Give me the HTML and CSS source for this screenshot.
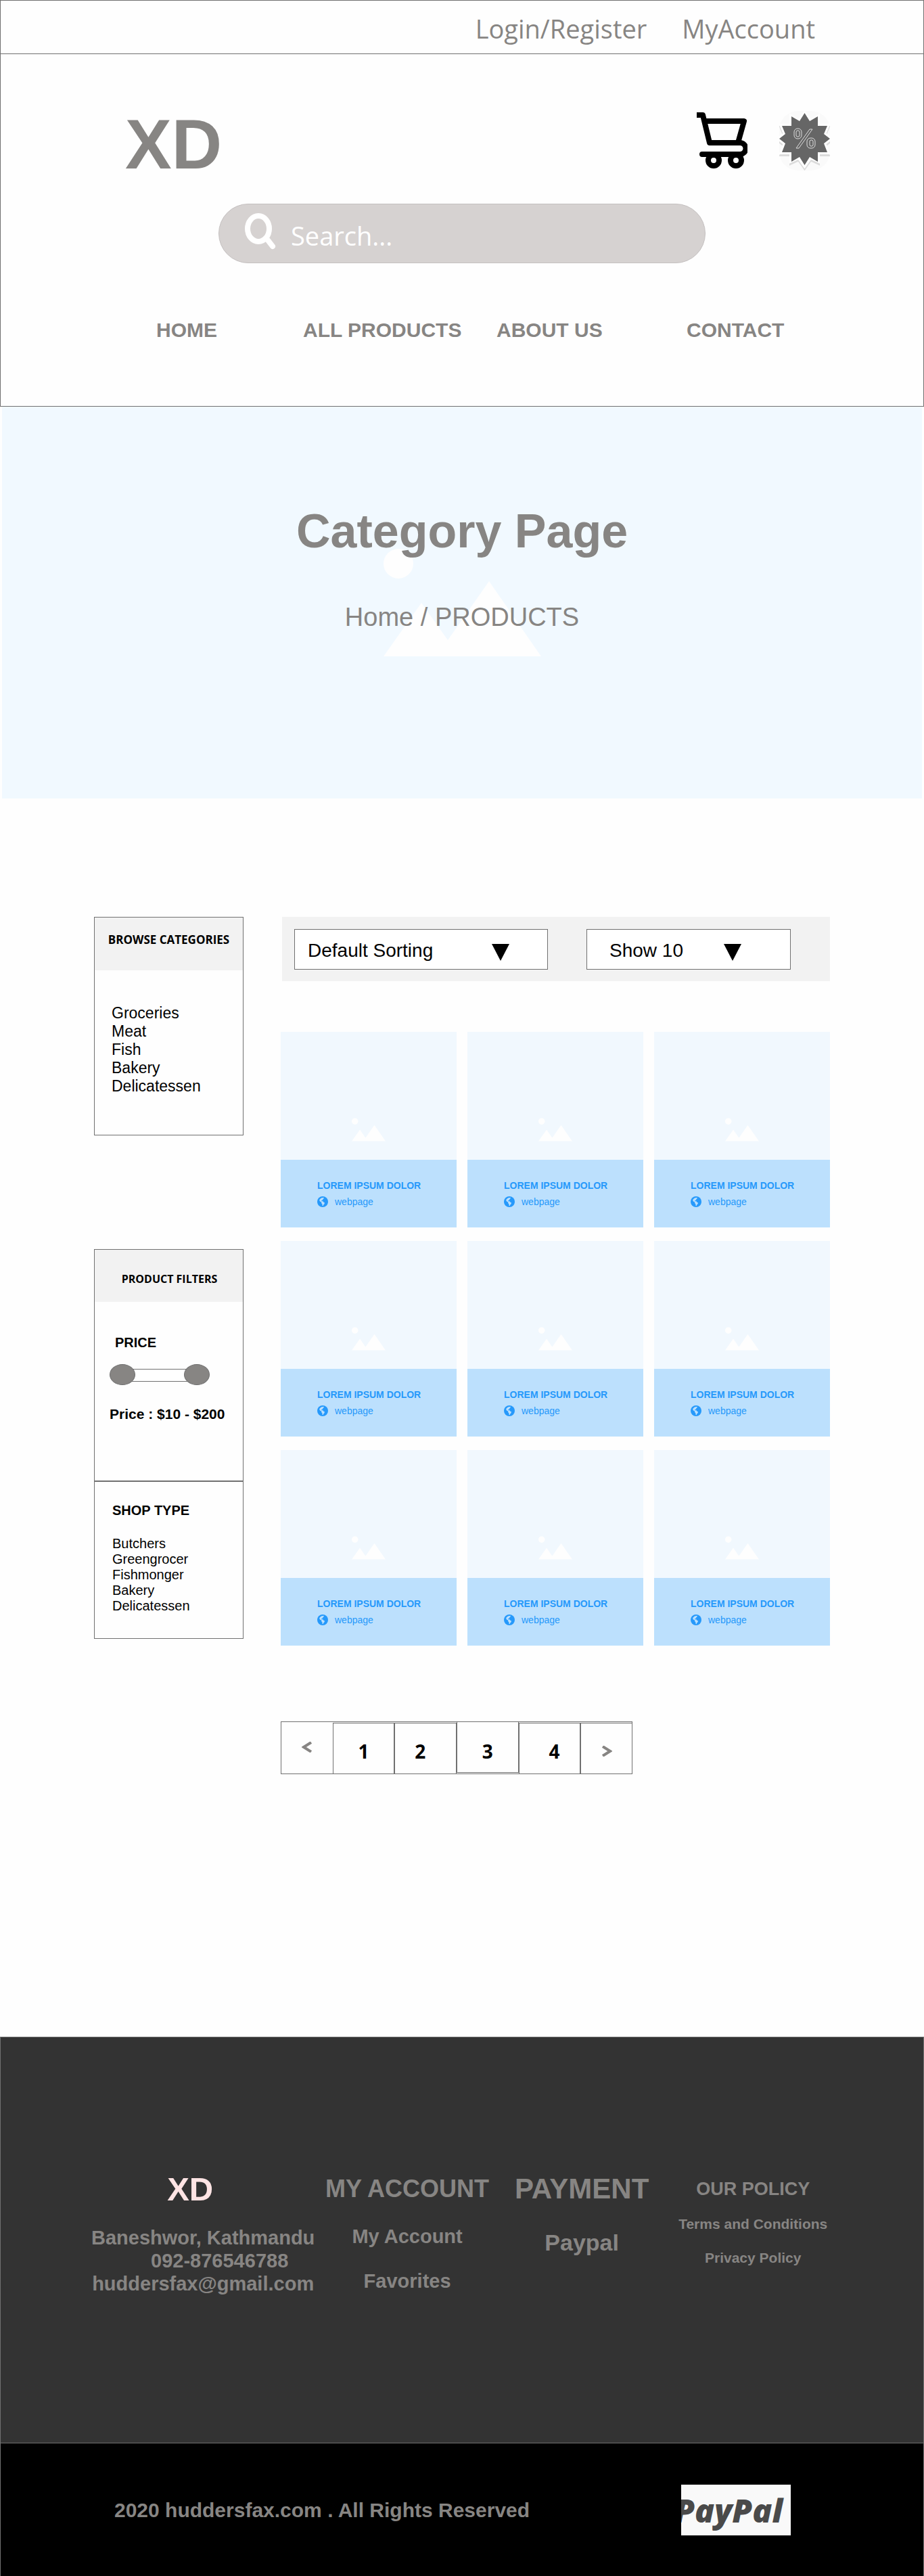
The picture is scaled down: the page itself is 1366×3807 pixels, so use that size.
FILE: index.html
```html
<!DOCTYPE html>
<html lang="en">
<head>
<meta charset="utf-8">
<meta name="viewport" content="width=device-width, initial-scale=1">
<title>Category Page</title>
<link rel="stylesheet" href="styles.css">
</head>
<body>
<svg class="sprite" aria-hidden="true">
  <symbol id="picture" viewBox="0 0 233 159">
    <ellipse cx="22" cy="22" rx="22" ry="22"/>
    <path d="M0 159 56 80 95 135 156 48 233 159Z"/>
  </symbol>
  <symbol id="globe" viewBox="0 0 16 16">
    <circle cx="8" cy="8" r="8" fill="#2699fb"/>
    <path fill="#bce0fd" d="M9.600 1.700 9.500 3.400 8 4.400 8.300 5.400 6.500 6 6.200 7.300 8.500 7.200 9 8.600 11 9.600 10.400 11.400 9.200 12.600 8.600 14.300 7.600 13.900 7.400 11.600 6.200 10.200 6.200 8.600 4.600 8 3.200 6.200 3.600 4.400 6 2.400Z"/>
  </symbol>
</svg>

<header class="site-header">
  <div class="topbar">
    <a href="#">Login/Register</a>
    <a href="#">MyAccount</a>
  </div>
  <div class="masthead">
    <div class="brand-row">
      <a class="logo" href="#">XD</a>
      <div class="tools">
        <a class="cart" href="#" aria-label="Cart">
          <svg width="75" height="84" viewBox="0 0 75 84">
            <path fill="none" stroke="#000" stroke-width="8" stroke-linejoin="round" d="M0 4H9L19 45H61L70 13H11"/>
            <path fill="none" stroke="#000" stroke-width="8" stroke-linecap="round" d="M60 45H64A8 8 0 0 1 64 62H8"/>
            <circle cx="25" cy="71" r="8" fill="#fff" stroke="#000" stroke-width="8"/>
            <circle cx="58" cy="71" r="8" fill="#fff" stroke="#000" stroke-width="8"/>
          </svg>
        </a>
        <a class="offers" href="#" aria-label="Offers">
          <svg width="75" height="88" viewBox="0 0 75 88">
            <rect width="75" height="88" rx="28" fill="#fafafa"/>
            <path fill="#dcdcdc" stroke="#dcdcdc" stroke-width="6" d="M37.500 7 46 19 57 12 57 25 71 25 66 37 75 44 66 51 71 64 57 64 57 76 46 71 37.500 83 29 71 18 76 18 64 4 64 9 51 0 44 9 37 4 25 18 25 18 12 29 19Z"/>
            <path fill="#fff" stroke="#fff" stroke-width="6" d="M37.500 4 46 16 57 9 57 22 71 22 66 34 75 41 66 48 71 61 57 61 57 73 46 68 37.500 80 29 68 18 73 18 61 4 61 9 48 0 41 9 34 4 22 18 22 18 9 29 16Z"/>
            <path fill="#666" d="M37.500 3 45 15 57 8 57 22 71 22 66 34 75 41 66 48 71 61 57 61 57 75 45 68 37.500 80 30 68 18 75 18 61 4 61 9 48 0 41 9 34 4 22 18 22 18 8 30 15Z"/>
            <g fill="none" stroke="#ddd">
              <rect x="22" y="26" width="11" height="15" rx="5"/><rect x="25" y="29" width="5" height="9" rx="2"/>
              <rect x="41" y="40" width="12" height="15" rx="5"/><rect x="45" y="43" width="5" height="9" rx="2"/>
              <path d="M45 27H49L29 55H25Z"/>
            </g>
          </svg>
        </a>
      </div>
    </div>
    <form class="search" role="search">
      <svg width="46" height="54" viewBox="0 0 46 54" aria-hidden="true">
        <ellipse cx="20" cy="23" rx="16" ry="19" fill="none" stroke="#fff" stroke-width="8"/>
        <path d="M34 40 41 49" stroke="#fff" stroke-width="8" stroke-linecap="round"/>
      </svg>
      <input type="search" placeholder="Search..." aria-label="Search">
    </form>
    <nav class="main-nav">
      <a href="#">HOME</a>
      <a href="#">ALL PRODUCTS</a>
      <a href="#">ABOUT US</a>
      <a href="#">CONTACT</a>
    </nav>
  </div>
</header>

<section class="hero">
  <svg class="hero-art" aria-hidden="true"><use href="#picture"/></svg>
  <div class="hero-text">
    <h1>Category Page</h1>
    <p><a href="#">Home</a> / PRODUCTS</p>
  </div>
</section>

<main class="shop">
  <aside class="sidebar">
    <section class="panel categories">
      <h2>BROWSE CATEGORIES</h2>
      <ul>
        <li><a href="#">Groceries</a></li>
        <li><a href="#">Meat</a></li>
        <li><a href="#">Fish</a></li>
        <li><a href="#">Bakery</a></li>
        <li><a href="#">Delicatessen</a></li>
      </ul>
    </section>
    <section class="panel filters">
      <h2>PRODUCT FILTERS</h2>
      <div class="price">
        <h3>PRICE</h3>
        <div class="slider">
          <input type="range" min="10" max="200" value="10" aria-label="Lowest price">
          <input type="range" min="10" max="200" value="200" aria-label="Highest price">
        </div>
        <p>Price : $10 - $200</p>
      </div>
      <div class="shop-type">
        <h3>SHOP TYPE</h3>
        <ul>
          <li><a href="#">Butchers</a></li>
          <li><a href="#">Greengrocer</a></li>
          <li><a href="#">Fishmonger</a></li>
          <li><a href="#">Bakery</a></li>
          <li><a href="#">Delicatessen</a></li>
        </ul>
      </div>
    </section>
  </aside>

  <div class="results">
    <div class="toolbar">
      <div class="picker sort">
        <select aria-label="Sorting"><option>Default Sorting</option></select>
        <svg width="26" height="25" viewBox="0 0 26 25" aria-hidden="true"><path d="M0 0H26L13 25Z"/></svg>
      </div>
      <div class="picker count">
        <select aria-label="Items per page"><option>Show 10</option></select>
        <svg width="26" height="25" viewBox="0 0 26 25" aria-hidden="true"><path d="M0 0H26L13 25Z"/></svg>
      </div>
    </div>

    <div class="products">
      <article class="card"><div class="thumb"><svg><use href="#picture"/></svg></div><div class="info"><h3>LOREM IPSUM DOLOR</h3><a href="#"><svg><use href="#globe"/></svg>webpage</a></div></article>
      <article class="card"><div class="thumb"><svg><use href="#picture"/></svg></div><div class="info"><h3>LOREM IPSUM DOLOR</h3><a href="#"><svg><use href="#globe"/></svg>webpage</a></div></article>
      <article class="card"><div class="thumb"><svg><use href="#picture"/></svg></div><div class="info"><h3>LOREM IPSUM DOLOR</h3><a href="#"><svg><use href="#globe"/></svg>webpage</a></div></article>
      <article class="card"><div class="thumb"><svg><use href="#picture"/></svg></div><div class="info"><h3>LOREM IPSUM DOLOR</h3><a href="#"><svg><use href="#globe"/></svg>webpage</a></div></article>
      <article class="card"><div class="thumb"><svg><use href="#picture"/></svg></div><div class="info"><h3>LOREM IPSUM DOLOR</h3><a href="#"><svg><use href="#globe"/></svg>webpage</a></div></article>
      <article class="card"><div class="thumb"><svg><use href="#picture"/></svg></div><div class="info"><h3>LOREM IPSUM DOLOR</h3><a href="#"><svg><use href="#globe"/></svg>webpage</a></div></article>
      <article class="card"><div class="thumb"><svg><use href="#picture"/></svg></div><div class="info"><h3>LOREM IPSUM DOLOR</h3><a href="#"><svg><use href="#globe"/></svg>webpage</a></div></article>
      <article class="card"><div class="thumb"><svg><use href="#picture"/></svg></div><div class="info"><h3>LOREM IPSUM DOLOR</h3><a href="#"><svg><use href="#globe"/></svg>webpage</a></div></article>
      <article class="card"><div class="thumb"><svg><use href="#picture"/></svg></div><div class="info"><h3>LOREM IPSUM DOLOR</h3><a href="#"><svg><use href="#globe"/></svg>webpage</a></div></article>
    </div>

    <nav class="pages" aria-label="Pages">
      <a class="step prev" href="#" aria-label="Previous"><svg width="16" height="16" viewBox="0 0 16 16"><path d="M14 1 3 8 14 15"/></svg></a>
      <a class="page" href="#">1</a>
      <a class="page early" href="#">2</a>
      <a class="page current" href="#" aria-current="page">3</a>
      <a class="page late" href="#">4</a>
      <a class="step next" href="#" aria-label="Next"><svg width="16" height="16" viewBox="0 0 16 16"><path d="M2 1 13 8 2 15"/></svg></a>
    </nav>
  </div>
</main>

<footer class="site-footer">
  <div class="footer-cols">
    <section class="contact">
      <h2>XD</h2>
      <address>
        <p>Baneshwor, Kathmandu</p>
        <p class="phone">092-876546788</p>
        <p><a href="#">huddersfax@gmail.com</a></p>
      </address>
    </section>
    <section class="account">
      <h2>MY ACCOUNT</h2>
      <ul><li><a href="#">My Account</a></li><li><a href="#">Favorites</a></li></ul>
    </section>
    <section class="payment">
      <h2>PAYMENT</h2>
      <ul><li><a href="#">Paypal</a></li></ul>
    </section>
    <section class="policy">
      <h2>OUR POLICY</h2>
      <ul><li><a href="#">Terms and Conditions</a></li><li><a href="#">Privacy Policy</a></li></ul>
    </section>
  </div>
  <div class="legal">
    <div class="legal-inner">
      <p>2020 huddersfax.com . All Rights Reserved</p>
      <div class="paypal">PayPal</div>
    </div>
  </div>
</footer>
</body>
</html>
```
FILE: styles.css
```css
* { box-sizing: border-box; }

body {
  margin: 0;
  background: #fefefe;
  color: #000;
  font-family: "Liberation Sans", Arial, sans-serif;
}

h1, h2, h3, p, ul { margin: 0; padding: 0; }
ul { list-style: none; }
a { color: inherit; text-decoration: none; }
svg { display: block; }
.sprite { position: absolute; width: 0; height: 0; }

/* Header */
.site-header { border: 1px solid #707070; color: #878583; }

.topbar {
  display: flex;
  justify-content: flex-end;
  gap: 52px;
  height: 79px;
  padding: 5px 160px 0 0;
  border-bottom: 1px solid #707070;
  font: 38px/72px "Open Sans", "Noto Sans", sans-serif;
}

.masthead {
  max-width: 1088px;
  margin: 0 auto;
  padding: 84px 0 94px;
}

.brand-row {
  display: flex;
  justify-content: space-between;
  align-items: flex-start;
  padding-left: 46px;
}
.logo { font-size: 103px; font-weight: bold; line-height: 100px; }
.tools { display: flex; gap: 47px; }
.cart { padding-top: 2px; }

.search {
  display: flex;
  align-items: center;
  gap: 22px;
  max-width: 720px;
  height: 88px;
  margin: 37px auto 0;
  padding: 0 38px;
  border: 1px solid #c4c0c0;
  border-radius: 44px;
  background: #d6d2d1;
}
.search svg { margin-bottom: 6px; }
.search input {
  flex: 1;
  min-width: 0;
  padding: 6px 0 0;
  border: 0;
  outline: 0;
  background: none;
  color: #fff;
  font: 38px/52px "Open Sans", "Noto Sans", sans-serif;
  appearance: none;
}
.search input::placeholder { color: #fff; opacity: 1; }

.main-nav {
  display: grid;
  grid-template-columns: 217fr 286fr 281fr 212fr;
  margin-top: 81px;
  padding-left: 92px;
  font-size: 30px;
  font-weight: bold;
  line-height: 36px;
}

/* Hero */
.hero {
  display: grid;
  margin: 0 3px;
  background: #f1f9ff;
  color: #878583;
  text-align: center;
}
.hero-art, .hero-text { grid-area: 1 / 1; }
.hero-art {
  width: 233px;
  height: 159px;
  margin-top: 210px;
  justify-self: center;
  fill: #fefefe;
}
.hero-text { padding: 144px 0 246px; }
.hero h1 { font-size: 70px; line-height: 80px; }
.hero p { margin-top: 65px; font-size: 38px; line-height: 44px; }

/* Shop */
.shop {
  display: grid;
  grid-template-columns: 221px minmax(0, 1fr);
  align-items: start;
  gap: 55px;
  max-width: 1088px;
  margin: 0 auto;
  padding: 175px 0 388px;
}

.sidebar { display: grid; gap: 168px; }
.panel { border: 1px solid #707070; }
.panel h2 {
  background: #f2f2f2;
  font: bold 17px/24px "Open Sans", "Noto Sans", sans-serif;
  text-align: center;
}
.panel h3 { font-size: 20px; line-height: 24px; }
.categories h2 { padding: 21px 0 33px; }
.categories ul {
  padding: 50px 25px 58px;
  font-size: 23px;
  line-height: 27px;
}
.filters h2 { padding: 31px 0 22px 2px; font-size: 16px; }
.price { padding: 48px 22px 86px; }
.price h3 { padding-left: 8px; }
.price p {
  margin-top: 29px;
  font-size: 21px;
  font-weight: bold;
  line-height: 24px;
  white-space: nowrap;
}

.slider {
  display: grid;
  width: 148px;
  margin-top: 20px;
}
.slider::before {
  content: "";
  grid-area: 1 / 1;
  height: 17px;
  margin: 7px 19px;
  border: 1px solid #707070;
  background: #fff;
}
.slider input {
  grid-area: 1 / 1;
  width: 100%;
  height: 31px;
  margin: 0;
  background: none;
  appearance: none;
  pointer-events: none;
}
.slider input::-webkit-slider-thumb {
  width: 38px;
  height: 31px;
  border: 1px solid #707070;
  border-radius: 50%;
  background: #878583;
  appearance: none;
  pointer-events: auto;
}

.shop-type {
  padding: 30px 26px 36px;
  border-top: 2px solid #707070;
  font-size: 20px;
  line-height: 23px;
}
.shop-type ul { margin-top: 26px; }

.toolbar {
  display: flex;
  gap: 57px;
  margin-left: 2px;
  padding: 18px 18px 17px;
  background: #f2f2f2;
}
.picker { display: grid; align-items: center; }
.picker select, .picker svg { grid-area: 1 / 1; }
.picker select {
  width: 100%;
  height: 60px;
  border: 1px solid #707070;
  border-radius: 0;
  background: #fff;
  color: #000;
  font: 28px/32px "Liberation Sans", Arial, sans-serif;
  appearance: none;
}
.picker svg { justify-self: end; pointer-events: none; margin-top: 8px; }
.sort { flex: 0 1 375px; }
.sort select { padding: 4px 20px 0 19px; }
.sort svg { margin-right: 57px; }
.count { flex: 0 1 302px; }
.count select { padding: 4px 20px 0 33px; }
.count svg { margin-right: 73px; }

.products {
  display: grid;
  grid-template-columns: repeat(3, minmax(0, 1fr));
  gap: 20px 16px;
  margin-top: 75px;
}
.thumb {
  display: flex;
  justify-content: center;
  padding: 127px 0 27px;
  background: #f1f8fe;
}
.thumb svg { width: 50px; height: 35px; fill: #fefefe; }
.info {
  padding: 30px 50px 30px 54px;
  background: #bce0fd;
  color: #2699fb;
  font-size: 14px;
  line-height: 16px;
}
.info h3 { font-size: 14px; white-space: nowrap; }
.info a { display: flex; align-items: center; gap: 10px; margin-top: 8px; }
.info svg { width: 16px; height: 16px; }

.pages {
  display: grid;
  grid-template-columns: 76fr 92fr 92fr 92fr 92fr 76fr;
  max-width: 520px;
  height: 78px;
  margin-top: 112px;
  border: 1px solid #707070;
  font: bold 28px/40px "Open Sans", "Noto Sans", sans-serif;
}
.page {
  margin-top: 1px;
  padding-top: 21px;
  border: 1px solid #707070;
  border-bottom: 0;
  text-align: center;
}
.early { padding-right: 16px; }
.current {
  margin: 0 0 1px;
  border-top: 0;
  border-bottom: 1px solid #707070;
  padding-top: 23px;
}
.late { padding-left: 14px; }
.step { display: flex; justify-content: center; }
.step path { fill: none; stroke: #878583; stroke-width: 4; }
.prev { padding-top: 29px; }
.next {
  margin-top: 1px;
  padding-top: 33px;
  border: 1px solid #707070;
  border-width: 1px 0 0 1px;
}

/* Footer */
.site-footer {
  background: #333;
  color: #878583;
  font-weight: bold;
}
.footer-cols {
  display: grid;
  grid-template-columns: 329fr 274fr 243fr 264fr;
  min-height: 600px;
  padding: 196px 120px 0 134px;
  border: 1px solid #707070;
  border-bottom: 0;
  text-align: center;
}
.footer-cols h2 { line-height: 56px; white-space: nowrap; }
.footer-cols ul { display: grid; }
.contact h2 { padding-right: 38px; color: #ffe4e4; font-size: 49px; }
.contact address {
  margin-top: 27px;
  font-size: 29px;
  font-style: normal;
  line-height: 34px;
  white-space: nowrap;
}
.contact .phone { padding-left: 49px; }
.account h2 { font-size: 36px; }
.account ul { gap: 32px; margin-top: 25px; font-size: 29px; line-height: 34px; }
.payment h2 { font-size: 42px; }
.payment ul { margin-top: 31px; font-size: 34px; line-height: 40px; }
.policy h2 { font-size: 27px; }
.policy ul { gap: 24px; margin-top: 11px; font-size: 21px; line-height: 26px; }

.legal {
  padding: 61px 0 60px;
  border: 1px solid #707070;
  border-bottom: 0;
  background: #000;
}
.legal-inner {
  display: flex;
  align-items: center;
  justify-content: space-between;
  max-width: 1088px;
  margin: 0 auto;
  padding: 0 58px 0 30px;
}
.legal p { font-size: 30px; line-height: 36px; }
.paypal {
  display: flex;
  justify-content: flex-end;
  width: 162px;
  padding-right: 12px;
  overflow: hidden;
  background: #f9f9f9;
  color: #4a4a4a;
  font: italic 800 48px/75px "Open Sans", "Noto Sans", sans-serif;
}
```
